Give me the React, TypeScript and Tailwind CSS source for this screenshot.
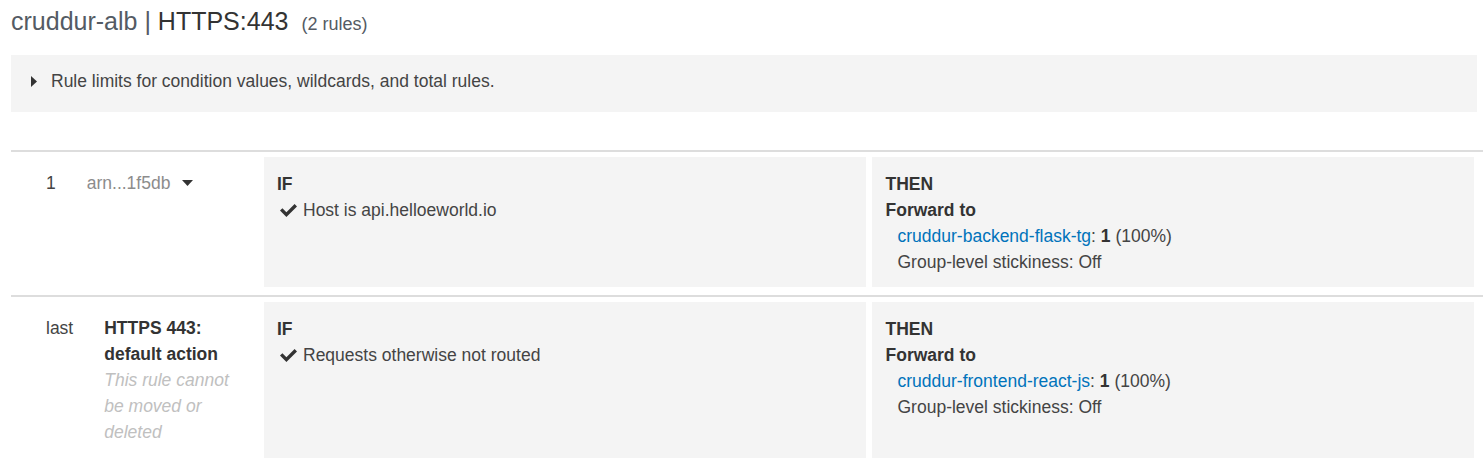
import React from 'react';

const font = { fontFamily: '"Liberation Sans", Arial, sans-serif' };

function Check() {
    return (
        <svg width="17" height="14" viewBox="0 0 17 14" className="shrink-0">
            <path d="M0 7.6 L2.4 5.2 L6.4 9.2 L14.6 1 L17 3.4 L6.4 14 Z" fill="#333" />
        </svg>
    );
}

function Caret() {
    return (
        <svg width="11" height="6" viewBox="0 0 11 6" className="ml-[12px] inline-block">
            <path d="M0 0 L11 0 L5.5 6 Z" fill="#333" />
        </svg>
    );
}

interface RuleRowProps {
    num: string;
    name: React.ReactNode;
    condition: string;
    target: string;
}

function RuleRow({ num, name, condition, target }: RuleRowProps) {
    return (
        <div className="flex border-t-2 border-[#dddddd]">
            <div className="w-[253px] shrink-0 flex pl-[35px] pt-[18px] pb-[21px] leading-[26px]">
                <div className="pr-[31px] text-[#444]">{num}</div>
                <div className="w-[140px]">{name}</div>
            </div>
            <div className="flex-1 flex gap-[6px] mt-[5px] mb-[8px] mr-[9px]">
                <div className="flex-1 bg-[#f4f4f4] pl-[13px] pt-[14px] pb-[12px] leading-[26px]">
                    <div className="font-bold text-[#333]">IF</div>
                    <div className="flex items-center gap-[6px] pl-[3px] text-[#444]">
                        <Check />
                        <span>{condition}</span>
                    </div>
                </div>
                <div className="flex-1 bg-[#f4f4f4] pl-[14px] pt-[14px] pb-[12px] leading-[26px] text-[#444]">
                    <div className="font-bold text-[#333]">THEN</div>
                    <div className="font-bold text-[#333]">Forward to</div>
                    <div className="pl-[12px]">
                        <span className="text-[#0073bb]">{target}</span>: <span className="font-bold text-[#333]">1</span> (100%)
                    </div>
                    <div className="pl-[12px]">Group-level stickiness: Off</div>
                </div>
            </div>
        </div>
    );
}

export default function App() {
    return (
        <div className="min-h-screen bg-white pl-[11px] text-[17.5px]" style={font}>
            {/* Header */}
            <div className="flex items-baseline pt-[5px] h-[38px]">
                <h1 className="text-[25px] leading-[32px] text-[#545b64]">
                    cruddur-alb | <span className="text-[#333]">HTTPS:443</span>
                </h1>
                <span className="ml-[13px] text-[18px] text-[#545b64]">(2 rules)</span>
            </div>

            {/* Limits info */}
            <div className="mt-[17px] mr-[6px] h-[57px] bg-[#f4f4f4] flex items-center pl-[20px] pb-[5px] text-[#444]">
                <svg width="6" height="11" viewBox="0 0 6 11" className="mr-[14px]">
                    <path d="M0 0 L6 5.5 L0 11 Z" fill="#333" />
                </svg>
                Rule limits for condition values, wildcards, and total rules.
            </div>

            <div className="mt-[38px]">
                <RuleRow
                    num="1"
                    name={
                        <span className="text-[#8c8c8c] inline-flex items-center">
                            arn...1f5db <Caret />
                        </span>
                    }
                    condition="Host is api.helloeworld.io"
                    target="cruddur-backend-flask-tg"
                />
                <RuleRow
                    num="last"
                    name={
                        <div>
                            <div className="font-bold text-[#333]">HTTPS 443: default action</div>
                            <div className="italic text-[#c0c0c0]">This rule cannot be moved or deleted</div>
                        </div>
                    }
                    condition="Requests otherwise not routed"
                    target="cruddur-frontend-react-js"
                />
            </div>
        </div>
    );
}
